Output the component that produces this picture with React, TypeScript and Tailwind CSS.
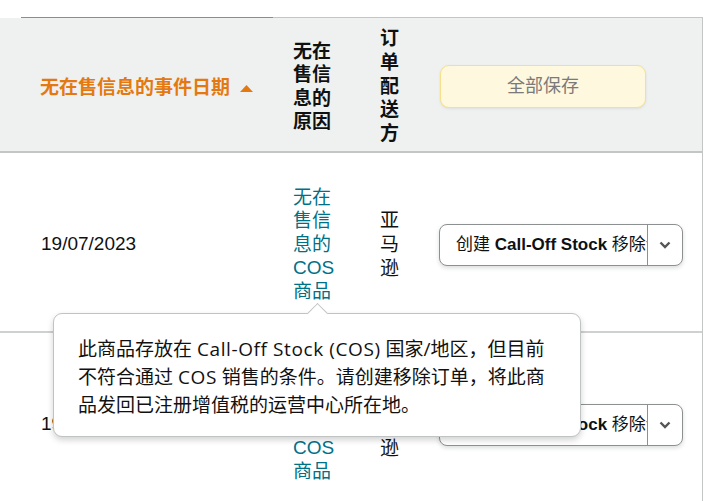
import React from "react";

const F = "font-['Liberation_Sans','Noto_Sans_CJK_SC',sans-serif]";

function Lines({ lines, className }: { lines: string[]; className?: string }) {
  return (
    <div className={className}>
      {lines.map((l, i) => (
        <div key={i} className="whitespace-nowrap">
          {l}
        </div>
      ))}
    </div>
  );
}

function Dropdown() {
  return (
    <div className="ml-[-1px] flex h-[42px] w-[244px] items-stretch overflow-hidden rounded-[8px] border border-[#8d9090] bg-white shadow-[0_2px_4px_rgba(15,17,17,0.15)]">
      <div className="flex flex-1 items-center overflow-hidden whitespace-nowrap pl-[16px] text-[17px] text-[#0f1111]">
        创建&nbsp;<span className="font-bold">Call-Off Stock</span>&nbsp;移除订单
      </div>
      <div className="flex w-[35px] shrink-0 items-center justify-center border-l border-[#8d9090]">
        <svg width="12" height="8" viewBox="0 0 12 8">
          <polyline points="1.5,1.5 6,6 10.5,1.5" fill="none" stroke="#555" strokeWidth="2.4" />
        </svg>
      </div>
    </div>
  );
}

function Row() {
  return (
    <div className="flex h-[180px] items-center border-b-2 border-[#cfd1d1] pt-[5px]">
      <div className="w-[273px] shrink-0 pl-[41px] text-[19px] text-[#0f1111]">19/07/2023</div>
      <div className="w-[87px] shrink-0 pl-[20px]">
        <Lines
          lines={["无在", "售信", "息的", "COS", "商品"]}
          className="text-[19px] leading-[23.5px] text-[#007185]"
        />
      </div>
      <div className="w-[80px] shrink-0 pl-[20px]">
        <Lines lines={["亚", "马", "逊"]} className="text-[19px] leading-[24px] text-[#0f1111]" />
      </div>
      <div className="flex-1">
        <Dropdown />
      </div>
    </div>
  );
}

const L = "font-medium tracking-[0.6px]";

export default function App() {
  return (
    <div className={`relative h-[501px] w-[717px] overflow-hidden bg-white ${F}`}>
      <div className="h-[17px]" />
      <div className="w-[703px] border-r border-[#c4c6c6]">
        <div className="flex h-px">
          <div className="w-[21px] bg-white" />
          <div className="w-[252px] bg-[#e47911]" />
          <div className="flex-1 bg-[#c4c6c6]" />
        </div>
        <div className="flex h-[135px] items-center border-b-2 border-[#c4c6c6] bg-[#eff1f0] pt-[4px]">
          <div className="flex w-[273px] shrink-0 items-center pl-[40px] pt-[4px] text-[19px] font-bold text-[#e47911]">
            <span className="whitespace-nowrap">无在售信息的事件日期</span>
            <svg className="ml-[10px]" width="13" height="7" viewBox="0 0 13 7">
              <polygon points="0,7 6.5,0 13,7" fill="#e47911" />
            </svg>
          </div>
          <div className="w-[87px] shrink-0 pl-[20px]">
            <Lines
              lines={["无在", "售信", "息的", "原因"]}
              className="text-[19px] font-bold leading-[23.5px] text-[#0f1111]"
            />
          </div>
          <div className="w-[80px] shrink-0 pl-[20px]">
            <Lines
              lines={["订", "单", "配", "送", "方"]}
              className="text-[19px] font-bold leading-[23.8px] text-[#0f1111]"
            />
          </div>
          <div className="flex-1">
            <div className="flex h-[43px] w-[206px] items-center justify-center rounded-[9px] border border-[#f7e08c] bg-[#fef8df] text-[18px] text-[#7a7a7a] shadow-[0_1px_3px_rgba(0,0,0,0.08)]">
              全部保存
            </div>
          </div>
        </div>
        <Row />
        <Row />
      </div>

      <div className="absolute left-[53px] top-[313px] h-[124px] w-[528px] rounded-[9px] border border-[#c0c3c3] bg-white shadow-[0_3px_6px_rgba(0,0,0,0.18)]">
        <div className="absolute left-[256px] top-[-8px] h-[15px] w-[15px] rotate-45 border-l border-t border-[#c0c3c3] bg-white" />
        <div className="relative pl-[24px] pt-[21px] font-['Open_Sans','Noto_Sans_CJK_SC',sans-serif] text-[19px] leading-[28px] text-[#111]">
          <div className="whitespace-nowrap">
            此商品存放在 <span className={L}>Call-Off Stock (COS)</span> 国家/地区，但目前
          </div>
          <div className="whitespace-nowrap">
            不符合通过 <span className={L}>COS</span> 销售的条件。请创建移除订单，将此商
          </div>
          <div className="whitespace-nowrap">品发回已注册增值税的运营中心所在地。</div>
        </div>
      </div>
    </div>
  );
}
